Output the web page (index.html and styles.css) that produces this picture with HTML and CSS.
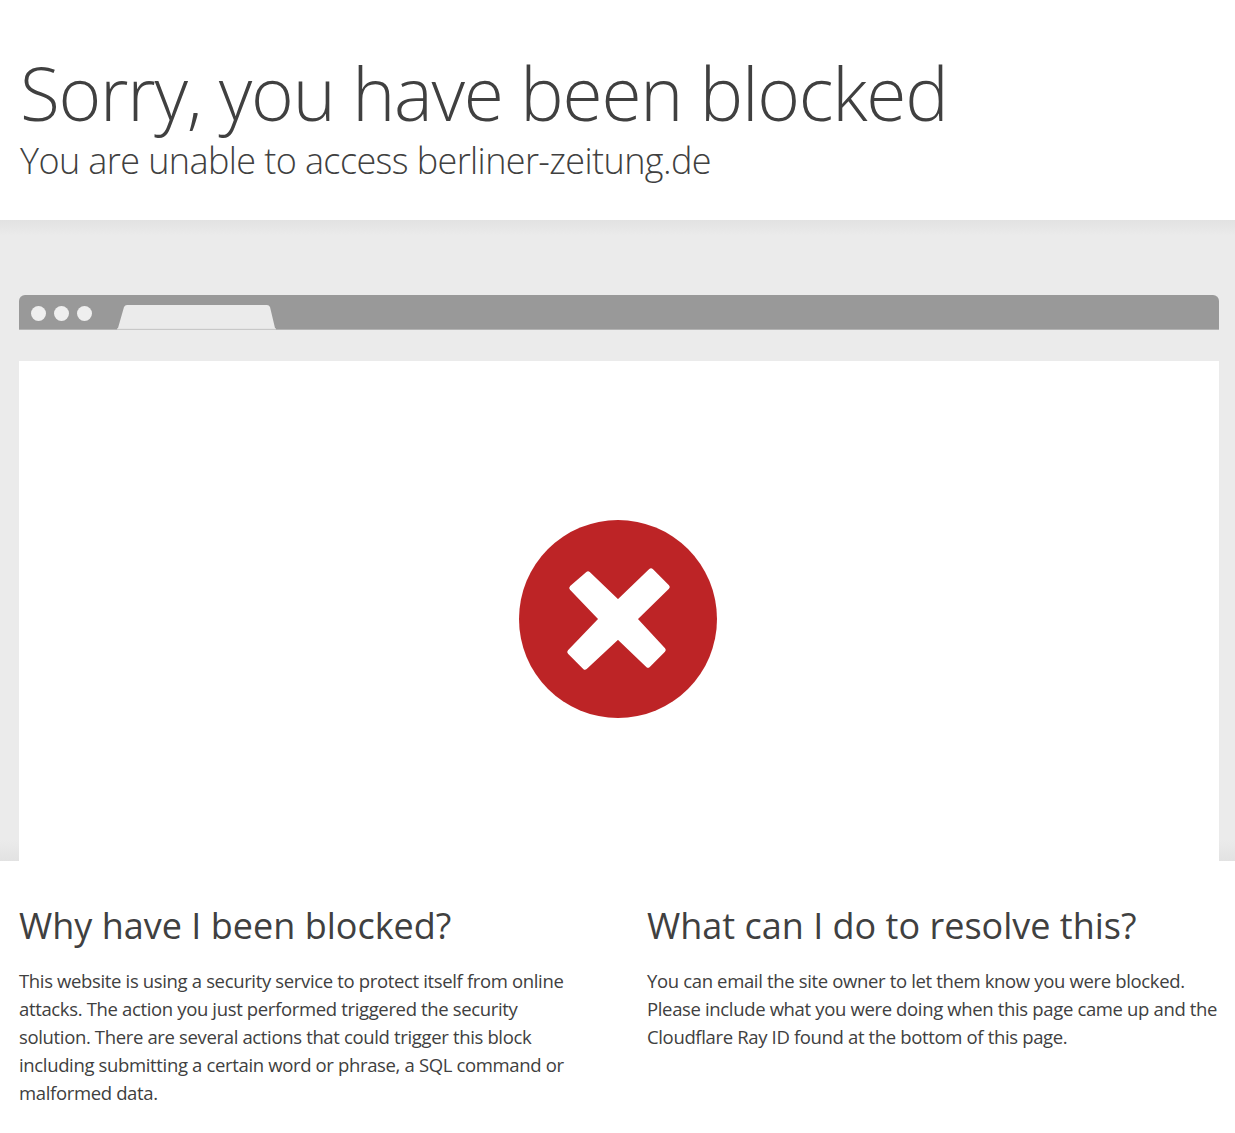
FILE: index.html
```html
<!DOCTYPE html>
<html lang="en">
<head>
<meta charset="utf-8">
<title>Attention Required! | Cloudflare</title>
<link rel="stylesheet" href="styles.css">
</head>
<body>
<header class="header">
  <h1 class="title">Sorry, you have been blocked</h1>
  <h2 class="subtitle">You are unable to access berliner-zeitung.de</h2>
</header>
<section class="stage">
  <div class="browser-bar">
    <div class="dots"><span class="dot"></span><span class="dot"></span><span class="dot"></span></div>
    <svg class="tab" width="160" height="26" viewBox="0 0 160 26"><path d="M0 25 L1 24 L7 3 Q8 1 10 1 L150 1 Q152 1 153 3 L158 24 L159 25 Z" fill="#ebebeb"/><path d="M0 25 H159" stroke="#dedede" stroke-width="1"/></svg>
  </div>
  <div class="viewport">
    <svg class="blocked" width="240" height="240" viewBox="0 0 240 240"><circle cx="118" cy="119" r="99" fill="#bd2426"/><path d="M88 73.8 L118 102.5 L151 70.8 L167.2 87 L134.5 119 L163.2 150 L148 165.2 L118 136.5 L85 167.2 L69.8 152 L101.5 119 L71.8 88 Z" fill="#fff" stroke="#fff" stroke-width="5" stroke-linejoin="round"/></svg>
  </div>
</section>
<section class="info">
  <div class="col">
    <h2 class="col-title">Why have I been blocked?</h2>
    <p class="col-text">This website is using a security service to protect itself from online attacks. The action you just performed triggered the security solution. There are several actions that could trigger this block including submitting a certain word or phrase, a SQL command or malformed data.</p>
  </div>
  <div class="col">
    <h2 class="col-title">What can I do to resolve this?</h2>
    <p class="col-text">You can email the site owner to let them know you were blocked. Please include what you were doing when this page came up and the Cloudflare Ray ID found at the bottom of this page.</p>
  </div>
</section>
</body>
</html>
```
FILE: styles.css
```css
* { box-sizing: border-box; }
html, body { margin: 0; padding: 0; background: #fff; }
body { font-family: "Open Sans", "Noto Sans", sans-serif; color: #404040; height: 1133px; overflow: hidden; }
.header { height: 220px; padding: 53px 19px 0 20px; }
.title { margin: 0 0 6px; font-size: 73px; line-height: 80px; font-weight: 300; letter-spacing: -1.25px; color: #404040; }
.subtitle { margin: 0; font-size: 36px; line-height: 44px; font-weight: 300; letter-spacing: -0.6px; color: #404040; }
.stage { height: 641px; padding: 75px 16px 0 19px; background: linear-gradient(#e2e2e2 0, #ebebeb 16px, #ebebeb 620px, #e2e2e2 641px); }
.browser-bar { width: 1200px; height: 35px; background: #999; border-bottom: 1px solid #b3b3b3; border-radius: 6px 6px 0 0; display: flex; align-items: flex-end; }
.dots { display: flex; gap: 8px; padding: 0 0 8px 12px; width: 98px; }
.dot { width: 15px; height: 15px; border-radius: 50%; background: #efefef; }
.tab { display: block; margin-bottom: -1px; }
.viewport { width: 1200px; height: 500px; margin-top: 31px; padding: 18px 0 0 2px; background: #fff; display: flex; align-items: center; justify-content: center; }
.blocked { display: block; }
.info { width: 1200px; margin-left: 19px; display: grid; grid-template-columns: 572px 572px; column-gap: 56px; padding-top: 38px; }
.col-title { margin: 0 0 14px; font-size: 36px; line-height: 54px; font-weight: 400; color: #404040; }
.col-text { margin: 0; font-size: 18.5px; line-height: 28px; font-weight: 400; letter-spacing: -0.35px; color: #404040; }
```
